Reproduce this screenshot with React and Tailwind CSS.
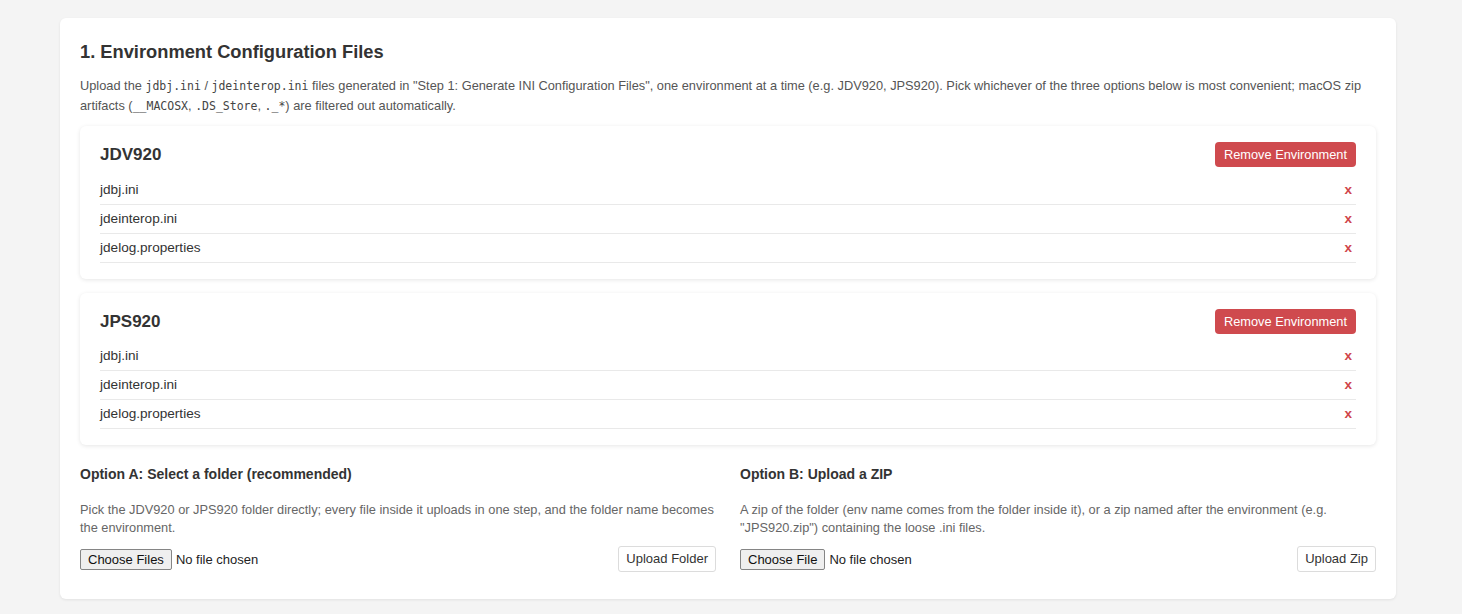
import { useState } from 'react';

const ENVIRONMENTS = [
  { name: 'JDV920', files: ['jdbj.ini', 'jdeinterop.ini', 'jdelog.properties'] },
  { name: 'JPS920', files: ['jdbj.ini', 'jdeinterop.ini', 'jdelog.properties'] }
];

const code = 'font-["DejaVu_Sans_Mono",monospace] text-[11.5px] leading-none text-[#444]';

function EnvironmentCard({ env, onRemove, onRemoveFile }) {
  return (
    <div className="bg-white rounded-md shadow-[0_1px_4px_rgba(0,0,0,0.1)] px-5 pt-4 pb-4">
      <div className="flex items-center justify-between mb-2">
        <h3 className="text-[17px] font-bold text-[#333]">{env.name}</h3>
        <button
          type="button"
          onClick={onRemove}
          className="h-[25px] px-[9px] rounded-[4px] bg-[#cf4a4e] text-white text-[12.8px]"
        >
          Remove Environment
        </button>
      </div>
      <ul>
        {env.files.map((file) => (
          <li
            key={file}
            className="flex items-center justify-between py-[6px] leading-4 border-b border-[#e9e9e9] text-[13.6px] text-[#333]"
          >
            <span>{file}</span>
            <button
              type="button"
              onClick={() => onRemoveFile(file)}
              className="px-1 text-[13.5px] font-bold text-[#d0454a] leading-4"
            >
              x
            </button>
          </li>
        ))}
      </ul>
    </div>
  );
}

function UploadOption({ title, description, inputProps, action }) {
  return (
    <div>
      <h4 className="text-[14px] font-bold text-[#333] leading-5 mb-[17px]">{title}</h4>
      <p className="text-[12.8px] leading-[18px] text-[#666] mb-[9px]">{description}</p>
      <div className="flex items-center justify-between">
        <input
          type="file"
          className="text-[13px] text-[#222] file:mr-[4px] file:h-[21px] file:px-[7px] file:bg-[#efefef] file:border file:border-[#858585] file:rounded-[2px] file:text-[13px] file:text-[#111]"
          {...inputProps}
        />
        <button
          type="button"
          className="h-[26px] px-[7px] rounded-[3px] border border-[#dcdcdc] bg-white text-[13px] text-[#333]"
        >
          {action}
        </button>
      </div>
    </div>
  );
}

export default function App() {
  const [envs, setEnvs] = useState(ENVIRONMENTS);

  const removeEnv = (name) => setEnvs((prev) => prev.filter((e) => e.name !== name));
  const removeFile = (name, file) =>
    setEnvs((prev) =>
      prev.map((e) => (e.name === name ? { ...e, files: e.files.filter((f) => f !== file) } : e))
    );

  return (
    <div className="min-h-screen bg-[#f4f4f4] pt-[18px] pb-4 font-['Liberation_Sans',Arial,sans-serif]">
      <div className="ml-[60px] w-[1336px] bg-white rounded-md shadow-[0_1px_3px_rgba(0,0,0,0.08)] px-5 pt-5 pb-[27px]">
        <h2 className="text-[18.3px] leading-7 font-bold text-[#333] mb-[10px]">
          1. Environment Configuration Files
        </h2>
        <p className="text-[12.8px] leading-5 text-[#555] mb-[10px]">
          Upload the <code className={code}>jdbj.ini</code> / <code className={code}>jdeinterop.ini</code> files
          generated in "Step 1: Generate INI Configuration Files", one environment at a time (e.g. JDV920,
          JPS920). Pick whichever of the three options below is most convenient; macOS zip artifacts (
          <code className={code}>__MACOSX</code>, <code className={code}>.DS_Store</code>,{' '}
          <code className={code}>._*</code>) are filtered out automatically.
        </p>

        {/* Environments already uploaded */}
        <div className="flex flex-col gap-[14px]">
          {envs.map((env) => (
            <EnvironmentCard
              key={env.name}
              env={env}
              onRemove={() => removeEnv(env.name)}
              onRemoveFile={(file) => removeFile(env.name, file)}
            />
          ))}
        </div>

        {/* Upload options */}
        <div className="grid grid-cols-2 gap-6 mt-[19px]">
          <UploadOption
            title="Option A: Select a folder (recommended)"
            description="Pick the JDV920 or JPS920 folder directly; every file inside it uploads in one step, and the folder name becomes the environment."
            inputProps={{ multiple: true, webkitdirectory: '' }}
            action="Upload Folder"
          />
          <UploadOption
            title="Option B: Upload a ZIP"
            description={'A zip of the folder (env name comes from the folder inside it), or a zip named after the environment (e.g. "JPS920.zip") containing the loose .ini files.'}
            inputProps={{ accept: '.zip' }}
            action="Upload Zip"
          />
        </div>
      </div>
    </div>
  );
}
